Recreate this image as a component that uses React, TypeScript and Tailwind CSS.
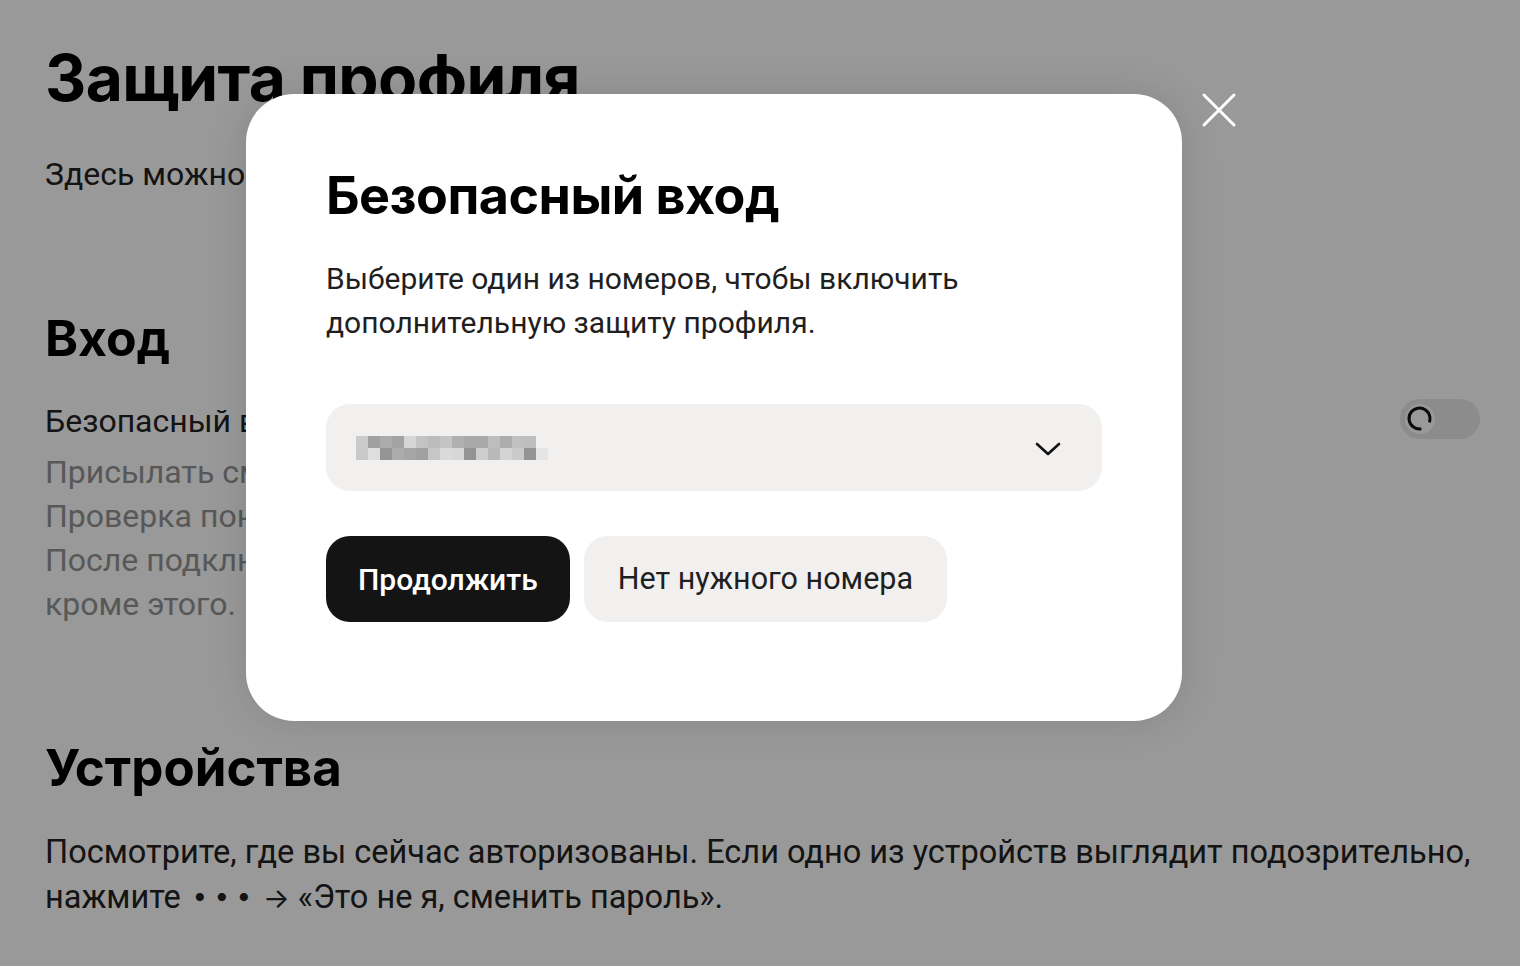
import React from "react";

const mosaicRow1 = ["#cbcbcb","#a0a0a0","#ababab","#a3a3a3","#d6d6d6","#c3c3c3","#bcbcbc","#c4c4c4","#b0b0b0","#a8a8a8","#a9a9a9","#bdbdbd","#adadad","#c0c0c0","#bebebe"];
const mosaicRow2 = ["#c9c9c9","#dedede","#959595","#acacac","#a6a6a6","#a1a1a1","#c6c6c6","#dadada","#d7d7d7","#939393","#cecece","#b9b9b9","#d4d4d4","#cacaca","#939393","#e4e4e4"];

function Mosaic() {
  return (
    <div className="flex flex-col blur-[0.4px]">
      <div className="flex">
        {mosaicRow1.map((c, i) => (
          <div key={i} className="h-[12px] w-[12px]" style={{ backgroundColor: c }} />
        ))}
      </div>
      <div className="flex">
        {mosaicRow2.map((c, i) => (
          <div key={i} className="h-[12px] w-[12px]" style={{ backgroundColor: c }} />
        ))}
      </div>
    </div>
  );
}

export default function App() {
  return (
    <div className="relative h-[966px] w-[1520px] overflow-hidden bg-white font-['Roboto','Noto_Sans',sans-serif] text-[#222]">
      <main className="pl-[45px] pr-[40px] pt-[47px]">
        <h1 className="font-['Inter','Roboto',sans-serif] text-[64px] font-bold leading-[62px] tracking-[-0.01em] text-black">
          Защита профиля
        </h1>
        <p className="mt-[43px] text-[32px] leading-[44px] text-[#222]">Здесь можно всё</p>

        <h2 className="mt-[114px] font-['Inter','Roboto',sans-serif] text-[50px] font-bold leading-[56px] text-black">
          Вход
        </h2>
        <div className="mt-[33px] flex items-start justify-between">
          <div>
            <div className="text-[32px] leading-[44px] text-[#222]">Безопасный вход</div>
            <div className="mt-[7px] text-[32px] leading-[44px] text-[#939393]">
              <div>Присылать смс-код</div>
              <div>Проверка понадоб</div>
              <div>После подключения</div>
              <div>кроме этого.</div>
            </div>
          </div>
          <div className="relative h-[40px] w-[80px] rounded-full bg-[#e9e9e9]">
            <svg className="absolute left-[4px] top-[4px]" width="32" height="32" viewBox="0 0 32 32">
              <circle cx="16" cy="16" r="15" fill="#ffffff" />
              <circle
                cx="15.5"
                cy="15.5"
                r="10.5"
                fill="none"
                stroke="#111"
                strokeWidth="3"
                strokeDasharray="55 11"
                transform="rotate(80 15.5 15.5)"
              />
            </svg>
          </div>
        </div>

        <h2 className="mt-[114px] font-['Inter','Roboto',sans-serif] text-[51px] font-bold leading-[56px] text-black">
          Устройства
        </h2>
        <p className="mt-[35px] text-[32.5px] leading-[43px] text-[#222]">
          Посмотрите, где вы сейчас авторизованы. Если одно из устройств выглядит подозрительно,
          <br />
          нажмите{" "}
          <span className="font-['Inter',sans-serif] text-[26px] align-[3px]">
            <span className="inline-block w-[22px] text-center">•</span>
            <span className="inline-block w-[22px] text-center">•</span>
            <span className="inline-block w-[22px] text-center">•</span>
          </span>{" "}
          <span className="font-['Inter',sans-serif] text-[28px]">→</span> «Это не я, сменить пароль».
        </p>
      </main>

      {/* overlay */}
      <div className="absolute inset-0 bg-black/40" />

      {/* modal */}
      <div className="absolute left-[246px] top-[94px] h-[627px] w-[936px] rounded-[48px] bg-white px-[80px] pt-[72px] shadow-[0_0_40px_rgba(0,0,0,0.12)]">
        <h3 className="font-['Inter','Roboto',sans-serif] text-[52px] font-bold leading-[60px] tracking-[-0.01em] text-black">
          Безопасный вход
        </h3>
        <p className="mt-[31px] text-[30px] leading-[44px] text-[#1f1f1f]">
          Выберите один из номеров, чтобы включить
          <br />
          дополнительную защиту профиля.
        </p>
        <div className="mt-[59px] flex h-[87px] w-full items-center justify-between rounded-[24px] bg-[#f1f0ee] pl-[30px] pr-[41px]">
          <Mosaic />
          <svg className="mt-[3px]" width="26" height="14" viewBox="0 0 26 14" fill="none">
            <polyline points="2,2 13,12 24,2" stroke="#111" strokeWidth="2.6" strokeLinecap="round" strokeLinejoin="round" />
          </svg>
        </div>
        <div className="mt-[45px] flex gap-[14px]">
          <button className="h-[86px] rounded-[24px] bg-[#141414] px-[32px] text-[30px] font-medium text-white">
            Продолжить
          </button>
          <button className="h-[86px] rounded-[24px] bg-[#f1f0ee] px-[34px] text-[30.5px] text-[#1f1f1f]">
            Нет нужного номера
          </button>
        </div>
      </div>

      {/* close */}
      <button className="absolute left-[1201px] top-[92px] h-[36px] w-[36px]">
        <svg width="36" height="36" viewBox="0 0 36 36" fill="none">
          <path d="M3 3 L33 33 M33 3 L3 33" stroke="#fff" strokeWidth="3" strokeLinecap="round" />
        </svg>
      </button>
    </div>
  );
}
